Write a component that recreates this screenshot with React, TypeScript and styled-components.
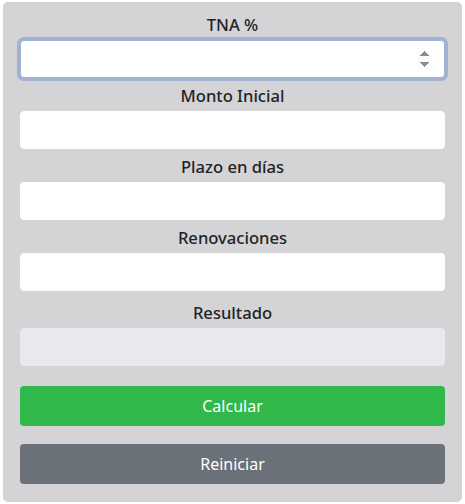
import React from "react";
import styled, { createGlobalStyle } from "styled-components";

const Global = createGlobalStyle`
  html, body { margin: 0; padding: 0; background: #ffffff; }
  * { box-sizing: border-box; }
`;

const Panel = styled.div`
  margin: 2px 3px 0 3px;
  width: 459px;
  height: 500px;
  padding: 10px 17px 18px 17px;
  background: #d4d3d5;
  border-radius: 5px;
  font-family: "Noto Sans", "Open Sans", sans-serif;
  display: flex;
  flex-direction: column;
`;

const Group = styled.div<{ $mt?: number }>`
  display: flex;
  flex-direction: column;
  align-items: center;
  margin-top: ${(p) => p.$mt ?? 0}px;
`;

const Label = styled.label`
  font-size: 16.6px;
  font-weight: 500;
  color: #222326;
  line-height: 26px;
  margin-bottom: 2px;
`;

const Field = styled.input<{ $disabled?: boolean }>`
  width: 425px;
  height: 38px;
  border: 1px solid ${(p) => (p.$disabled ? "#e9e8ec" : "#ffffff")};
  border-radius: 4px;
  background: ${(p) => (p.$disabled ? "#e9e8ec" : "#ffffff")};
  font-family: inherit;
  font-size: 16px;
  padding: 6px 12px;
  color: #212529;
  outline: none;
  &:focus {
    border-color: #9db4d9;
    box-shadow: 0 0 0 3px rgba(120, 150, 205, 0.55);
  }
`;

const Button = styled.button<{ $variant: "green" | "gray" }>`
  width: 425px;
  height: 40px;
  border: none;
  border-radius: 4px;
  background: ${(p) => (p.$variant === "green" ? "#30b94a" : "#6b7178")};
  color: #ffffff;
  font-family: inherit;
  font-size: 16px;
  margin-top: ${(p) => (p.$variant === "green" ? 20 : 18)}px;
  cursor: pointer;
`;

export default function App() {
  return (
    <>
      <Global />
      <Panel>
        <Group>
          <Label>TNA %</Label>
          <Field type="number" autoFocus />
        </Group>
        <Group $mt={5}>
          <Label>Monto Inicial</Label>
          <Field type="text" />
        </Group>
        <Group $mt={5}>
          <Label>Plazo en días</Label>
          <Field type="text" />
        </Group>
        <Group $mt={5}>
          <Label>Renovaciones</Label>
          <Field type="text" />
        </Group>
        <Group $mt={9}>
          <Label>Resultado</Label>
          <Field type="text" $disabled disabled />
        </Group>
        <Button $variant="green">Calcular</Button>
        <Button $variant="gray">Reiniciar</Button>
      </Panel>
    </>
  );
}
